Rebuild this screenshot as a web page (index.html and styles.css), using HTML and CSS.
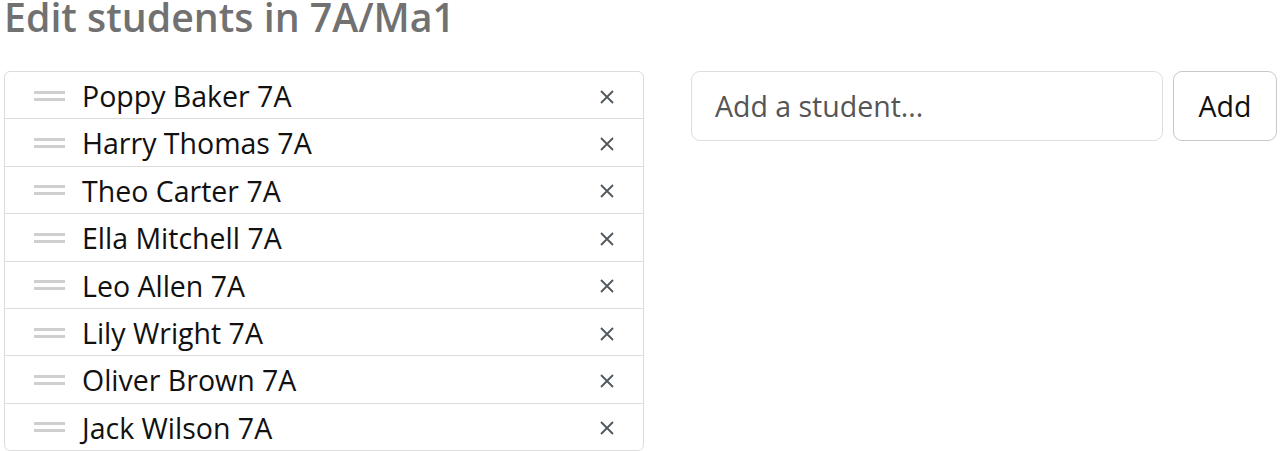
FILE: index.html
```html
<!DOCTYPE html>
<html lang="en">
<head>
<meta charset="utf-8">
<title>Edit students in 7A/Ma1</title>
<link rel="stylesheet" href="styles.css">
</head>
<body>
<div class="page">
  <h1 class="title">Edit students in 7A/Ma1</h1>
  <div class="editor">
    <ul class="student-list">
      <li class="student"><span class="handle"></span><span class="name">Poppy Baker 7A</span><button class="remove" aria-label="Remove"><svg viewBox="0 0 16 16" width="16" height="16"><path d="M2 2 L14 14 M14 2 L2 14"/></svg></button></li>
      <li class="student"><span class="handle"></span><span class="name">Harry Thomas 7A</span><button class="remove" aria-label="Remove"><svg viewBox="0 0 16 16" width="16" height="16"><path d="M2 2 L14 14 M14 2 L2 14"/></svg></button></li>
      <li class="student"><span class="handle"></span><span class="name">Theo Carter 7A</span><button class="remove" aria-label="Remove"><svg viewBox="0 0 16 16" width="16" height="16"><path d="M2 2 L14 14 M14 2 L2 14"/></svg></button></li>
      <li class="student"><span class="handle"></span><span class="name">Ella Mitchell 7A</span><button class="remove" aria-label="Remove"><svg viewBox="0 0 16 16" width="16" height="16"><path d="M2 2 L14 14 M14 2 L2 14"/></svg></button></li>
      <li class="student"><span class="handle"></span><span class="name">Leo Allen 7A</span><button class="remove" aria-label="Remove"><svg viewBox="0 0 16 16" width="16" height="16"><path d="M2 2 L14 14 M14 2 L2 14"/></svg></button></li>
      <li class="student"><span class="handle"></span><span class="name">Lily Wright 7A</span><button class="remove" aria-label="Remove"><svg viewBox="0 0 16 16" width="16" height="16"><path d="M2 2 L14 14 M14 2 L2 14"/></svg></button></li>
      <li class="student"><span class="handle"></span><span class="name">Oliver Brown 7A</span><button class="remove" aria-label="Remove"><svg viewBox="0 0 16 16" width="16" height="16"><path d="M2 2 L14 14 M14 2 L2 14"/></svg></button></li>
      <li class="student"><span class="handle"></span><span class="name">Jack Wilson 7A</span><button class="remove" aria-label="Remove"><svg viewBox="0 0 16 16" width="16" height="16"><path d="M2 2 L14 14 M14 2 L2 14"/></svg></button></li>
    </ul>
    <div class="add-form">
      <input class="add-input" type="text" placeholder="Add a student...">
      <button class="add-btn">Add</button>
    </div>
  </div>
</div>
</body>
</html>
```
FILE: styles.css
```css
html, body {
  margin: 0;
  padding: 0;
  background: #fff;
}
body {
  font-family: "Open Sans", "Noto Sans", sans-serif;
  color: #111;
}
.page {
  padding: 0 3px 0 4px;
}
.title {
  margin: 0;
  height: 71px;
  font-size: 39.3px;
  font-weight: 600;
  line-height: 34px;
  color: #717171;
}
.editor {
  display: flex;
  align-items: flex-start;
  gap: 47px;
}
.student-list {
  list-style: none;
  margin: 0;
  padding: 0;
  width: 638px;
  border: 1px solid #dcdcdc;
  border-radius: 6px;
  flex: none;
}
.student {
  display: flex;
  align-items: center;
  height: 46.4px;
  border-top: 1px solid #dcdcdc;
}
.student:first-child {
  border-top: none;
}
.handle {
  width: 31px;
  height: 10px;
  margin-left: 29px;
  margin-top: 1px;
  border-top: 3px solid #cfcfcf;
  border-bottom: 3px solid #cfcfcf;
  box-sizing: border-box;
  flex: none;
}
.name {
  margin-left: 17px;
  padding-top: 2px;
  font-size: 28.5px;
  line-height: 1;
  flex: 1;
}
.remove {
  border: none;
  background: none;
  padding: 0;
  margin-right: 28px;
  margin-top: 3px;
  width: 16px;
  height: 16px;
  display: flex;
}
.remove svg {
  stroke: #50565c;
  stroke-width: 1.8;
  fill: none;
}
.add-form {
  flex: 1;
  display: flex;
  gap: 10px;
}
.add-input {
  flex: 1;
  min-width: 0;
  height: 70px;
  box-sizing: border-box;
  border: 1px solid #dedede;
  border-radius: 9px;
  padding: 0 23px;
  font-family: "Open Sans", "Noto Sans", sans-serif;
  font-size: 28.5px;
  color: #222;
}
.add-input::placeholder {
  color: #555;
}
.add-btn {
  width: 104px;
  height: 70px;
  box-sizing: border-box;
  border: 1px solid #c8c8c8;
  border-radius: 9px;
  background: #fff;
  font-family: "Open Sans", "Noto Sans", sans-serif;
  font-size: 28.5px;
  color: #111;
  padding: 0;
}
```
